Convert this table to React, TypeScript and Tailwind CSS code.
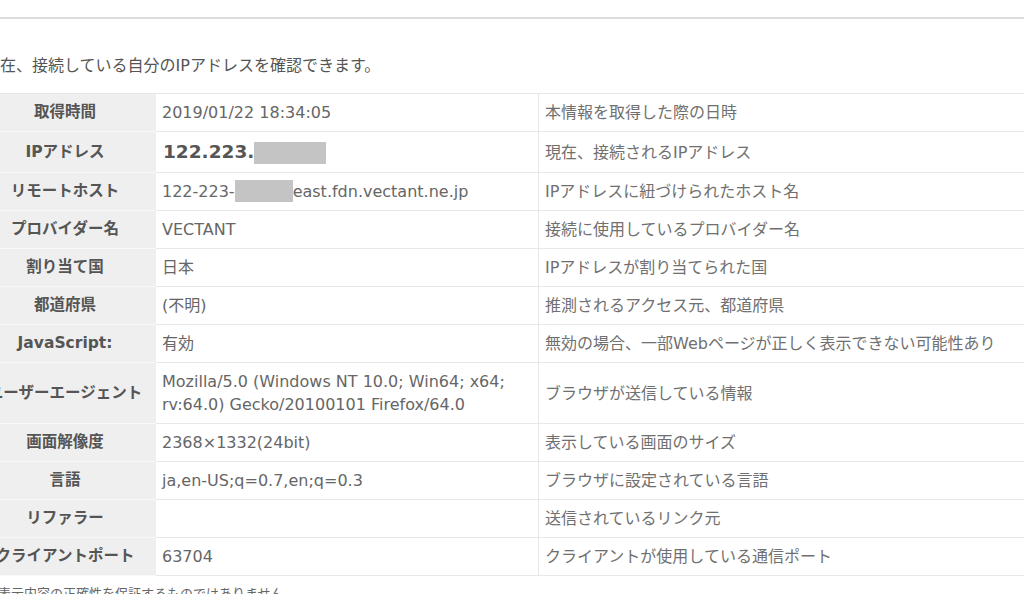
import React from 'react';

type Row = {
  label: string;
  value: React.ReactNode;
  desc: string;
  big?: boolean;
};

function Mask({ w, align }: { w: string; align: string }) {
  return <span className={`inline-block h-[22px] ${w} ${align} bg-[#c4c4c4]`} />;
}

const rows: Row[] = [
  { label: '取得時間', value: '2019/01/22 18:34:05', desc: '本情報を取得した際の日時' },
  {
    label: 'IPアドレス',
    value: (
      <>
        122.223.
        <Mask w="w-[72px]" align="align-middle" />
      </>
    ),
    desc: '現在、接続されるIPアドレス',
    big: true,
  },
  {
    label: 'リモートホスト',
    value: (
      <>
        122-223-
        <Mask w="w-[58px]" align="align-top" />
        east.fdn.vectant.ne.jp
      </>
    ),
    desc: 'IPアドレスに紐づけられたホスト名',
  },
  { label: 'プロバイダー名', value: 'VECTANT', desc: '接続に使用しているプロバイダー名' },
  { label: '割り当て国', value: '日本', desc: 'IPアドレスが割り当てられた国' },
  { label: '都道府県', value: '(不明)', desc: '推測されるアクセス元、都道府県' },
  {
    label: 'JavaScript:',
    value: '有効',
    desc: '無効の場合、一部Webページが正しく表示できない可能性あり',
  },
  {
    label: 'ユーザーエージェント',
    value: (
      <>
        Mozilla/5.0 (Windows NT 10.0; Win64; x64;
        <br />
        rv:64.0) Gecko/20100101 Firefox/64.0
      </>
    ),
    desc: 'ブラウザが送信している情報',
  },
  { label: '画面解像度', value: '2368×1332(24bit)', desc: '表示している画面のサイズ' },
  { label: '言語', value: 'ja,en-US;q=0.7,en;q=0.3', desc: 'ブラウザに設定されている言語' },
  { label: 'リファラー', value: '', desc: '送信されているリンク元' },
  { label: 'クライアントポート', value: '63704', desc: 'クライアントが使用している通信ポート' },
];

export default function App() {
  return (
    <div className="w-[1024px] h-[594px] overflow-hidden bg-white [font-family:DejaVu_Sans,Noto_Sans_CJK_JP,sans-serif]">
      <div className="h-[19px] border-b-2 border-[#dcdcdc]" />

      <div className="-ml-[26px] w-[1120px]">
        <p className="pl-[10px] pt-[35px] text-[16px] leading-[24px] text-[#555] whitespace-nowrap">
          現在、接続している自分のIPアドレスを確認できます。
        </p>

        <table className="mt-[15px] w-[1120px] border-separate border-spacing-0 border-t border-[#e8e8e8] table-fixed">
          <colgroup>
            <col className="w-[182px]" />
            <col className="w-[383px]" />
            <col />
          </colgroup>
          <tbody>
            {rows.map((r) => (
              <tr key={r.label}>
                <th className="bg-[#efefef] border-b border-[#f8f8f8] text-center align-middle text-[15.5px] leading-[23px] font-bold text-[#555] whitespace-nowrap py-[7px]">
                  {r.label}
                </th>
                <td
                  className={
                    r.big
                      ? 'border-b border-r border-[#e8e8e8] pl-[7px] py-[7px] text-[18.5px] leading-[26px] font-bold text-[#555] whitespace-nowrap'
                      : 'border-b border-r border-[#e8e8e8] pl-[6px] py-[7px] text-[16px] leading-[23px] text-[#666] whitespace-nowrap'
                  }
                >
                  {r.value}
                </td>
                <td className="border-b border-[#e8e8e8] pl-[6px] py-[7px] text-[16px] leading-[23px] text-[#707070] whitespace-nowrap">
                  {r.desc}
                </td>
              </tr>
            ))}
          </tbody>
        </table>

        <p className="pl-[24px] mt-[8px] text-[13px] leading-[20px] text-[#666] whitespace-nowrap">
          表示内容の正確性を保証するものではありません。
        </p>
      </div>
    </div>
  );
}
